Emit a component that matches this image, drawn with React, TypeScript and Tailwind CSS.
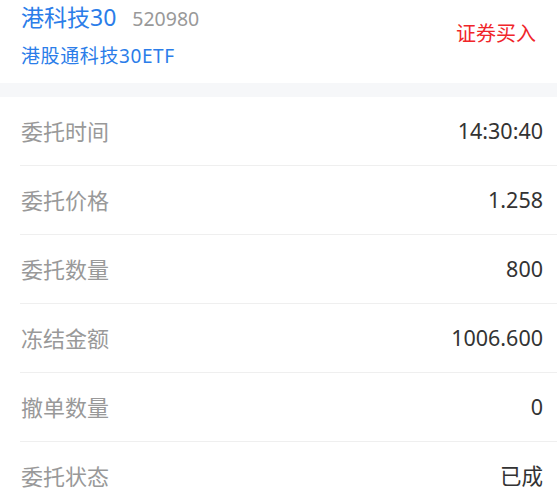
const rows = [
  { label: '委托时间', value: '14:30:40' },
  { label: '委托价格', value: '1.258' },
  { label: '委托数量', value: '800' },
  { label: '冻结金额', value: '1006.600' },
  { label: '撤单数量', value: '0' },
  { label: '委托状态', value: '已成' },
];

export default function App() {
  return (
    <div className="min-h-screen bg-white" style={{ fontFamily: '"Noto Sans", "Noto Sans CJK SC", sans-serif' }}>
      <div className="flex h-[83px] items-start justify-between pl-[21px] pr-[21px]">
        <div className="flex flex-col">
          <div className="mt-[2px] flex items-baseline">
            <span className="text-[23px] leading-[30px] text-[#2b7de9]">港科技30</span>
            <span className="ml-[16px] text-[19.5px] leading-[30px] text-[#999999]">520980</span>
          </div>
          <div className="mt-[9px] text-[19px] leading-[26px] tracking-[0.6px] text-[#2b7de9]">港股通科技30ETF</div>
        </div>
        <div className="mt-[21px] text-[20px] leading-[26px] text-[#f0262a]">证券买入</div>
      </div>
      <div className="h-[14px] bg-[#f6f7f9]" />
      <div className="pl-[20px]">
        {rows.map((row, i) => (
          <div
            key={row.label}
            className={`flex h-[69px] items-center justify-between pr-[14px] ${i < rows.length - 1 ? 'border-b border-[#efefef]' : ''}`}
          >
            <span className="pl-[1px] text-[22px] text-[#999999]">{row.label}</span>
            <span className="text-[21.5px] text-[#333333]">{row.value}</span>
          </div>
        ))}
      </div>
    </div>
  );
}
